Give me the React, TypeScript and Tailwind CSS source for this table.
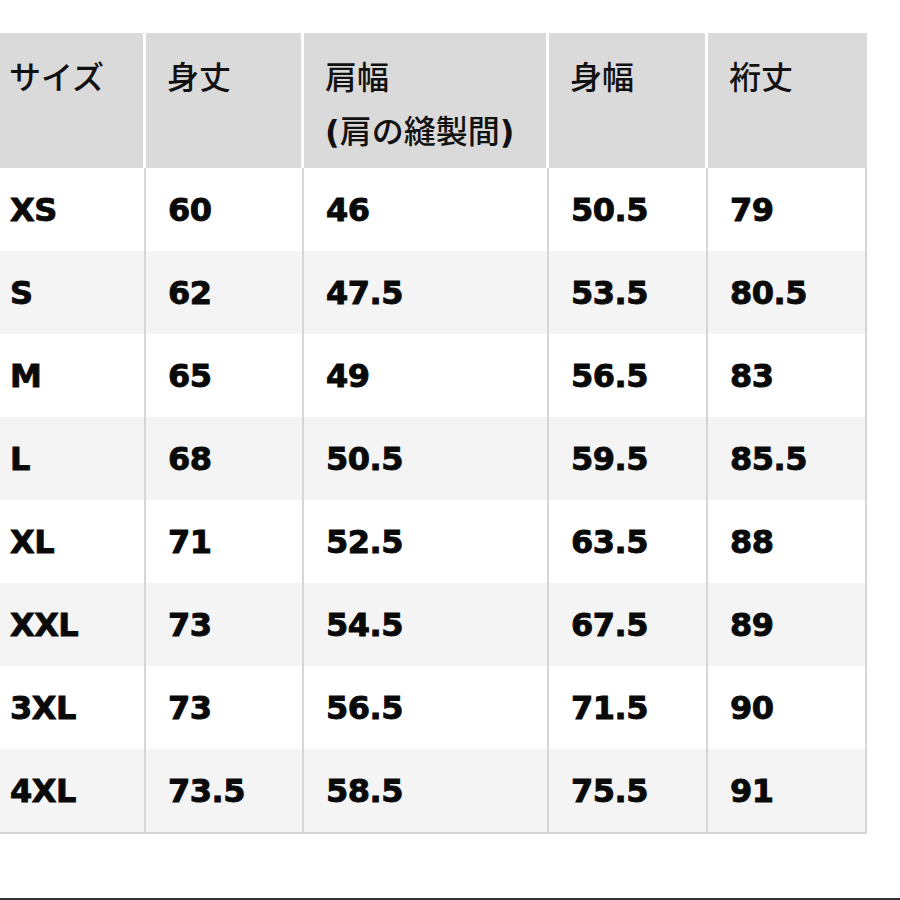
const headers: { lines: React.ReactNode[] }[] = [
  { lines: ["サイズ"] },
  { lines: ["身丈"] },
  {
    lines: [
      "肩幅",
      <>
        <span className="font-bold [font-family:'DejaVu_Sans',sans-serif]">(</span>肩の縫製間
        <span className="font-bold [font-family:'DejaVu_Sans',sans-serif]">)</span>
      </>,
    ],
  },
  { lines: ["身幅"] },
  { lines: ["裄丈"] },
];

const rows: string[][] = [
  ["XS", "60", "46", "50.5", "79"],
  ["S", "62", "47.5", "53.5", "80.5"],
  ["M", "65", "49", "56.5", "83"],
  ["L", "68", "50.5", "59.5", "85.5"],
  ["XL", "71", "52.5", "63.5", "88"],
  ["XXL", "73", "54.5", "67.5", "89"],
  ["3XL", "73", "56.5", "71.5", "90"],
  ["4XL", "73.5", "58.5", "75.5", "91"],
];

export default function App() {
  return (
    <div className="w-[900px] h-[900px] bg-white flex flex-col overflow-hidden">
      <div className="pt-[33px] w-[867px]">
        {/* Header */}
        <div
          className="grid grid-cols-[146px_158px_245px_159px_159px] h-[135px] bg-[#dadada] text-[#111] text-[32px] font-medium leading-[54px]"
          style={{ fontFamily: '"Noto Sans CJK JP", "Noto Sans", sans-serif' }}
        >
          {headers.map((h, i) => (
            <div
              key={i}
              className={`pt-[15px] ${i === 0 ? "pl-[9px]" : "pl-[21px]"} ${
                i < 4 ? "border-r-[3px] border-white" : ""
              }`}
            >
              {h.lines.map((l, j) => (
                <div key={j} className="whitespace-nowrap">
                  {l}
                </div>
              ))}
            </div>
          ))}
        </div>

        {/* Body */}
        <div
          className="border-b-2 border-[#d6d6d6] text-[#0a0a0a]"
          style={{ fontFamily: '"DejaVu Sans", sans-serif' }}
        >
          {rows.map((r, ri) => (
            <div
              key={ri}
              className={`grid grid-cols-[146px_158px_245px_159px_159px] h-[83px] ${
                ri % 2 === 1 ? "bg-[#f4f4f4]" : "bg-white"
              }`}
            >
              {r.map((c, ci) => (
                <div
                  key={ci}
                  className={`flex items-center font-bold text-[32px] tracking-[-0.5px] [-webkit-text-stroke:0.9px_#0a0a0a] border-r-2 border-[#d6d6d6] ${
                    ci === 0 ? "pl-[10px]" : "pl-[22px]"
                  }`}
                >
                  {c}
                </div>
              ))}
            </div>
          ))}
        </div>
      </div>
      <div className="flex-1" />
      <div className="h-[2px] bg-[#333]" />
    </div>
  );
}
